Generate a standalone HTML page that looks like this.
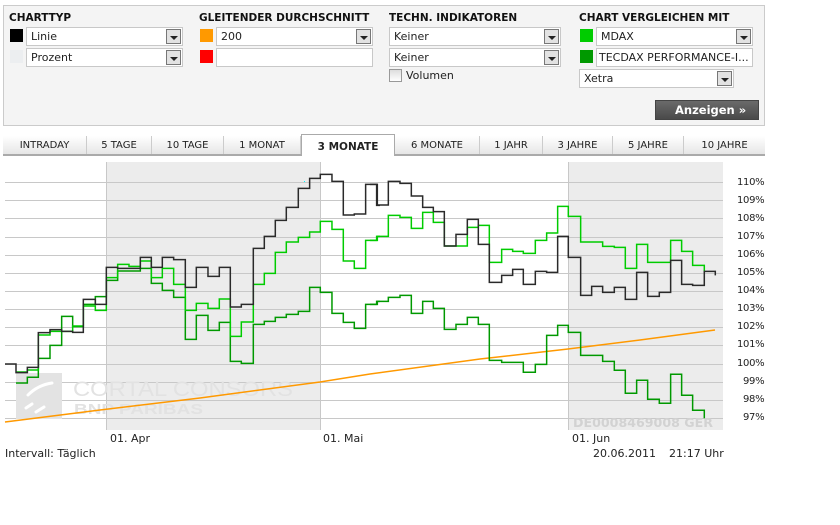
<!DOCTYPE html>
<html><head><meta charset="utf-8"><style>
*{box-sizing:border-box;margin:0;padding:0}
body{width:840px;height:525px;background:#fff;font-family:"DejaVu Sans","Liberation Sans",sans-serif;font-size:11px;color:#222;position:relative;overflow:hidden}
.a{position:absolute}
.panel{left:3px;top:5px;width:762px;height:121px;background:#f4f4f4;border:1px solid #cbcbcb}
.h{font-weight:bold;font-size:10.5px;color:#111;top:12px}
.sw{width:13px;height:13px}
.sel{height:19px;background:#fff;border:1px solid #c8c8c8;padding:2px 0 0 4px;font-size:11px;white-space:nowrap;overflow:hidden}
.arr{position:absolute;right:1px;top:1px;width:15px;height:15px;background:#e2e2e2;border:1px solid #777}
.arr:after{content:"";position:absolute;left:3px;top:6px;border-left:4px solid transparent;border-right:4px solid transparent;border-top:4px solid #222}
.btn{left:655px;top:100px;width:104px;height:20px;background:linear-gradient(#6a6a6a,#4a4a4a);border:1px solid #444;color:#fff;font-weight:bold;font-size:11.5px;padding:2px 0 0 19px}
.tabs{left:3px;top:136px;width:762px;height:20px;background:linear-gradient(#fff,#e6e6e6);border-bottom:2px solid #aaa}
.tab{top:136px;height:18px;font-size:10px;text-align:center;padding-top:4px;border-right:1px solid #ccc;color:#222}
.act{background:#fff;top:134px;height:22px;border:1px solid #aaa;border-bottom:none;font-weight:bold;font-size:10.5px;padding-top:6px}
.pl{left:737px;font-size:10px;color:#222;letter-spacing:-0.3px}
</style></head><body>
<div class="a panel"></div>
<div class="a h" style="left:9px">CHARTTYP</div>
<div class="a h" style="left:199px">GLEITENDER DURCHSCHNITT</div>
<div class="a h" style="left:389px">TECHN. INDIKATOREN</div>
<div class="a h" style="left:579px">CHART VERGLEICHEN MIT</div>

<div class="a sw" style="left:10px;top:29px;background:#000"></div>
<div class="a sel" style="left:26px;top:27px;width:157px">Linie<div class="arr"></div></div>
<div class="a sw" style="left:10px;top:50px;background:#eceef0"></div>
<div class="a sel" style="left:26px;top:48px;width:157px">Prozent<div class="arr"></div></div>

<div class="a sw" style="left:200px;top:29px;background:#ff9900"></div>
<div class="a sel" style="left:216px;top:27px;width:157px">200<div class="arr"></div></div>
<div class="a sw" style="left:200px;top:50px;background:#ff0000"></div>
<div class="a sel" style="left:216px;top:48px;width:157px"></div>

<div class="a sel" style="left:389px;top:27px;width:172px">Keiner<div class="arr"></div></div>
<div class="a sel" style="left:389px;top:48px;width:172px">Keiner<div class="arr"></div></div>
<div class="a" style="left:389px;top:69px;width:13px;height:13px;border:1px solid #999;background:linear-gradient(#ddd,#fff)"></div>
<div class="a" style="left:406px;top:69px">Volumen</div>

<div class="a sw" style="left:580px;top:29px;background:#00cc00"></div>
<div class="a sel" style="left:596px;top:27px;width:157px">MDAX<div class="arr"></div></div>
<div class="a sw" style="left:580px;top:50px;background:#009900"></div>
<div class="a sel" style="left:596px;top:48px;width:157px;padding-left:2px">TECDAX PERFORMANCE-I...</div>
<div class="a sel" style="left:579px;top:69px;width:155px">Xetra<div class="arr"></div></div>
<div class="a btn">Anzeigen &#187;</div>

<div class="a tabs"></div>
<div class="a tab" style="left:3px;width:84px">INTRADAY</div>
<div class="a tab" style="left:87px;width:65px">5 TAGE</div>
<div class="a tab" style="left:152px;width:72px">10 TAGE</div>
<div class="a tab" style="left:224px;width:77px">1 MONAT</div>
<div class="a tab act" style="left:301px;width:94px">3 MONATE</div>
<div class="a tab" style="left:395px;width:85px">6 MONATE</div>
<div class="a tab" style="left:480px;width:63px">1 JAHR</div>
<div class="a tab" style="left:543px;width:70px">3 JAHRE</div>
<div class="a tab" style="left:613px;width:71px">5 JAHRE</div>
<div class="a tab" style="left:684px;width:81px;border-right:none">10 JAHRE</div>

<svg class="a" style="left:0;top:0" width="840" height="525">
<rect x="106" y="162" width="214" height="268" fill="#ececec"/>
<rect x="568" y="162" width="155" height="268" fill="#ececec"/>
<line x1="106.5" y1="162" x2="106.5" y2="430" stroke="#c8c8c8"/>
<line x1="320.5" y1="162" x2="320.5" y2="430" stroke="#c8c8c8"/>
<line x1="568.5" y1="162" x2="568.5" y2="430" stroke="#c8c8c8"/>
<g stroke="#c8c8c8" stroke-width="1">
<line x1="5" x2="723" y1="182.5" y2="182.5"/><line x1="5" x2="723" y1="200.5" y2="200.5"/>
<line x1="5" x2="723" y1="218.5" y2="218.5"/><line x1="5" x2="723" y1="237.5" y2="237.5"/>
<line x1="5" x2="723" y1="255.5" y2="255.5"/><line x1="5" x2="723" y1="273.5" y2="273.5"/>
<line x1="5" x2="723" y1="291.5" y2="291.5"/><line x1="5" x2="723" y1="309.5" y2="309.5"/>
<line x1="5" x2="723" y1="327.5" y2="327.5"/><line x1="5" x2="723" y1="345.5" y2="345.5"/>
<line x1="5" x2="723" y1="364.5" y2="364.5"/><line x1="5" x2="723" y1="382.5" y2="382.5"/>
<line x1="5" x2="723" y1="400.5" y2="400.5"/><line x1="5" x2="723" y1="418.5" y2="418.5"/>
</g>
<rect x="16" y="373" width="46" height="46" fill="#e3e3e3"/>
<g stroke="#fff" stroke-width="3" fill="none" stroke-linecap="round">
<path d="M28 395 Q38 385 52 383"/><path d="M26 408 l6 -4"/><path d="M36 412 l8 -5"/>
</g>
<text x="73" y="396" font-family="Liberation Sans,sans-serif" font-size="21" fill="#e2e2e2" textLength="220" lengthAdjust="spacingAndGlyphs">CORTAL CONSORS</text>
<text x="74" y="414" font-family="Liberation Sans,sans-serif" font-weight="bold" font-size="15" fill="#e2e2e2" textLength="129" lengthAdjust="spacingAndGlyphs">BNP PARIBAS</text>
<text x="573" y="427" font-family="DejaVu Sans,sans-serif" font-weight="bold" font-size="12.5" fill="#d2d2d2" textLength="140" lengthAdjust="spacingAndGlyphs">DE0008469008  GER</text>
<polyline fill="none" stroke="#ff9900" stroke-width="1.5" points="5,422 100,410 200,398 320,382 370,374 480,359 568,349 640,340 715,330"/>
<g transform="translate(0,160) scale(0.3333)" fill="none" stroke-width="4.5">
<polyline stroke="#009900" points="48,669 82,669 82,652 115,652 115,595 150,595 150,556 185,556 185,469 218,469 218,500 250,500 250,433 286,433 286,410 319,410 319,361 353,361 353,333 421,333 421,325 454,325 454,370 487,370 487,391 521,391 521,412 556,412 556,538 589,538 589,466 624,466 624,511 658,511 658,487 691,487 691,604 724,604 724,610 760,610 760,493 793,493 793,484 826,484 826,472 859,472 859,463 895,463 895,454 929,454 929,382 961,382 961,397 996,397 996,460 1030,460 1030,487 1063,487 1063,505 1097,505 1097,433 1130,433 1130,424 1140,424"/>
<polyline stroke="#00cc00" points="48,636 82,636 82,630 115,630 115,525 150,525 150,514 218,514 218,498 250,498 250,438 286,438 286,451 319,451 319,353 353,353 353,313 387,313 387,319 421,319 421,303 454,303 454,353 487,353 487,325 521,325 521,373 556,373 556,451 589,451 589,430 624,430 624,445 658,445 658,417 691,417 691,529 724,529 724,486 760,486 760,373 793,373 793,340 826,340 826,277 859,277 859,246 895,246 895,232 929,232 929,216 961,216 961,184 996,184 996,208 1030,208 1030,303 1063,303 1063,325 1097,325 1097,241 1130,241 1130,229 1140,229"/>
<polyline stroke="#2a2a2a" points="15,612 48,612 48,638 82,638 82,622 115,622 115,518 150,518 150,509 185,509 185,514 218,514 218,517 250,517 250,418 286,418 286,433 319,433 319,322 353,322 353,325 421,325 421,292 454,292 454,322 487,322 487,292 521,292 521,299 556,299 556,382 589,382 589,322 624,322 624,349 658,349 658,322 691,322 691,441 724,441 724,433 760,433 760,265 793,265 793,229 826,229 826,181 859,181 859,142 895,142 895,85 929,85 929,55 961,55 961,43 996,43 996,64 1030,64 1030,165 1063,165 1063,162 1097,162 1097,73 1130,73 1130,136 1140,136"/>
</g>
<g transform="translate(370,160) scale(0.3333)" fill="none" stroke-width="4.5">
<polyline stroke="#009900" points="0,433 22,433 22,424 55,424 55,412 90,412 90,406 124,406 124,460 158,460 158,424 190,424 190,445 223,445 223,508 258,508 258,493 292,493 292,472 325,472 325,493 358,493 358,601 395,601 395,607 460,607 460,637 496,637 496,613 530,613 530,526 563,526 563,496 595,496 595,517 632,517 632,586 698,586 698,604 733,604 733,631 766,631 766,700 800,700 800,661 833,661 833,718 868,718 868,730 902,730 902,643 935,643 935,706 968,706 968,751 1003,751 1003,775"/>
<polyline stroke="#00cc00" points="0,241 22,241 22,229 55,229 55,166 90,166 90,172 124,172 124,205 158,205 158,157 190,157 190,187 223,187 223,258 292,258 292,202 325,202 325,196 358,196 358,307 395,307 395,268 428,268 428,274 460,274 460,280 496,280 496,241 530,241 530,219 563,219 563,139 595,139 595,169 632,169 632,246 698,246 698,259 733,259 733,262 766,262 766,325 800,325 800,253 833,253 833,307 902,307 902,241 935,241 935,274 968,274 968,316 1003,316 1003,334"/>
<polyline stroke="#2a2a2a" points="0,73 22,73 22,135 55,135 55,64 90,64 90,70 124,70 124,108 158,108 158,142 190,142 190,155 223,155 223,258 258,258 258,223 292,223 292,178 325,178 325,253 358,253 358,367 395,367 395,346 428,346 428,328 460,328 460,373 496,373 496,334 530,334 530,337 563,337 563,229 595,229 595,292 632,292 632,406 665,406 665,379 698,379 698,397 733,397 733,382 766,382 766,418 800,418 800,337 833,337 833,409 868,409 868,397 902,397 902,301 935,301 935,373 968,373 968,376 1003,376 1003,334 1036,334 1036,346"/>
</g>
<rect x="304" y="181" width="1" height="1" fill="#0ff"/>
</svg>
<div class="a pl" style="top:177px">110%</div>
<div class="a pl" style="top:195px">109%</div>
<div class="a pl" style="top:213px">108%</div>
<div class="a pl" style="top:231px">107%</div>
<div class="a pl" style="top:249px">106%</div>
<div class="a pl" style="top:267px">105%</div>
<div class="a pl" style="top:285px">104%</div>
<div class="a pl" style="top:303px">103%</div>
<div class="a pl" style="top:321px">102%</div>
<div class="a pl" style="top:339px">101%</div>
<div class="a pl" style="top:358px">100%</div>
<div class="a pl" style="top:376px;left:743px">99%</div>
<div class="a pl" style="top:394px;left:743px">98%</div>
<div class="a pl" style="top:412px;left:743px">97%</div>
<div class="a" style="left:110px;top:432px">01. Apr</div>
<div class="a" style="left:323px;top:432px">01. Mai</div>
<div class="a" style="left:572px;top:432px">01. Jun</div>
<div class="a" style="left:5px;top:447px">Intervall: Täglich</div>
<div class="a" style="left:593px;top:447px">20.06.2011</div>
<div class="a" style="left:669px;top:447px">21:17 Uhr</div>
</body></html>
